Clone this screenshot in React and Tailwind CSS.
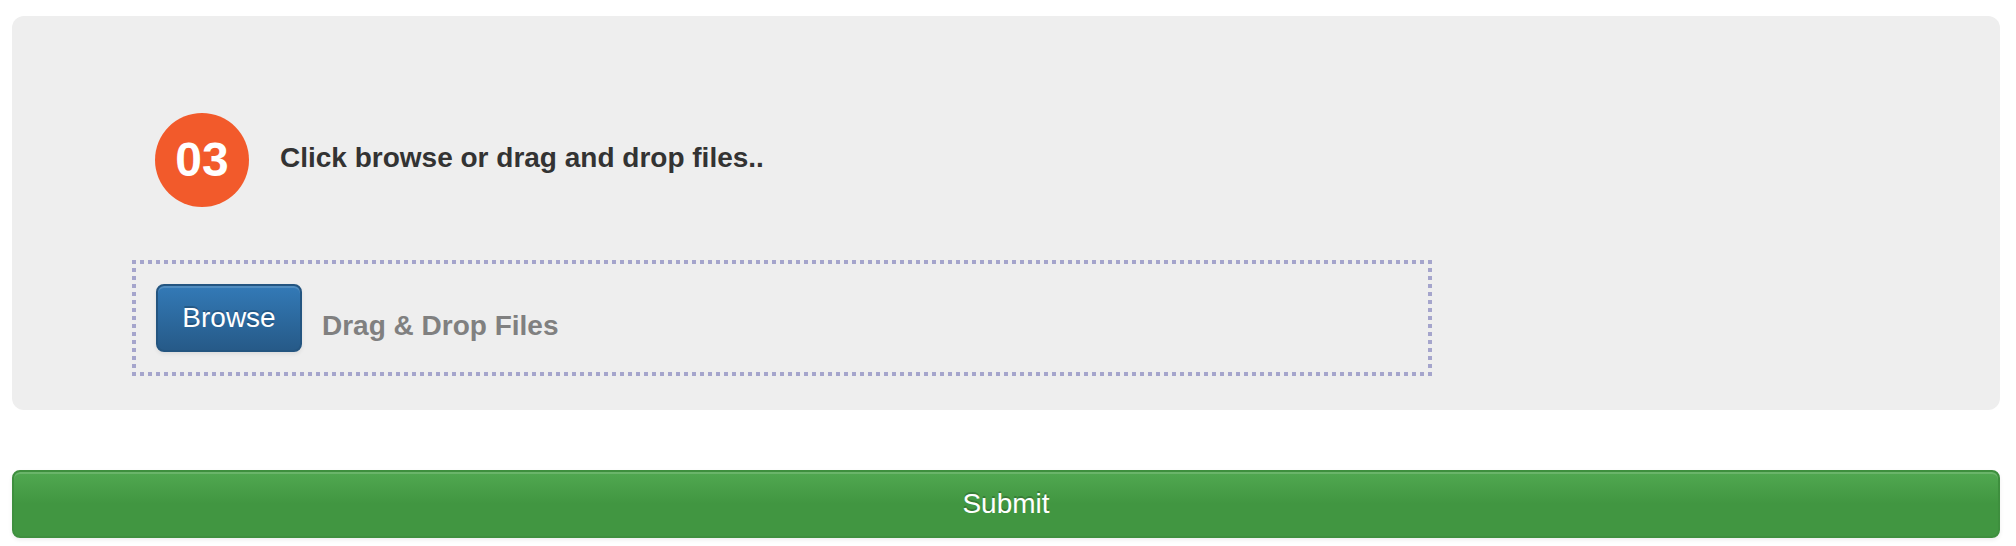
import React from "react";

const buttonBase =
  "h-[68px] rounded-lg border-2 text-[28px] leading-10 text-white cursor-pointer [text-shadow:0_-2px_0_rgba(0,0,0,0.2)] shadow-[inset_0_2px_0_rgba(255,255,255,0.15),0_2px_4px_rgba(0,0,0,0.075)]";

// Square dots, 4px wide with 4px gaps, along each edge of the drop zone.
const dottedFrame =
  "bg-[repeating-linear-gradient(to_right,#a5a5cc_0_4px,transparent_4px_8px),repeating-linear-gradient(to_right,#a5a5cc_0_4px,transparent_4px_8px),repeating-linear-gradient(to_bottom,#a5a5cc_0_4px,transparent_4px_8px),repeating-linear-gradient(to_bottom,#a5a5cc_0_4px,transparent_4px_8px)] [background-size:100%_4px,100%_4px,4px_100%,4px_100%] [background-position:left_top,left_bottom,left_top,right_top] bg-no-repeat";

function StepHeader({ number, title }) {
  return (
    <div className="flex items-center gap-[31px] pl-[23px]">
      <span className="flex size-[94px] shrink-0 items-center justify-center rounded-full bg-[#f25a2b] text-[48px] leading-[48px] font-bold text-white">
        {number}
      </span>
      <h2 className="pb-1 text-[28px] leading-10 font-bold text-[#333333]">{title}</h2>
    </div>
  );
}

function DropZone() {
  return (
    <div className={`mt-[53px] flex w-full max-w-[1300px] items-center gap-5 p-6 ${dottedFrame}`}>
      <button
        type="button"
        className={`${buttonBase} min-w-[146px] border-[#245580] bg-linear-to-b from-[#337ab7] to-[#265a88] px-6`}
      >
        Browse
      </button>
      <span className="pt-4 text-[28px] leading-10 font-bold text-[#808080]">
        Drag &amp; Drop Files
      </span>
    </div>
  );
}

export default function App() {
  return (
    <form
      className="bg-white pt-4 pr-4 pb-2 pl-3 font-['Liberation_Sans',Arial,sans-serif]"
      onSubmit={(event) => event.preventDefault()}
    >
      <section className="rounded-xl bg-[#eeeeee] px-[120px] pt-[97px] pb-[34px]">
        <StepHeader number="03" title="Click browse or drag and drop files.." />
        <DropZone />
      </section>
      <button
        type="submit"
        className={`${buttonBase} mt-[60px] block w-full border-[#3e8f3e] bg-[linear-gradient(to_bottom,#51a851_0%,#419641_50%)]`}
      >
        Submit
      </button>
    </form>
  );
}
